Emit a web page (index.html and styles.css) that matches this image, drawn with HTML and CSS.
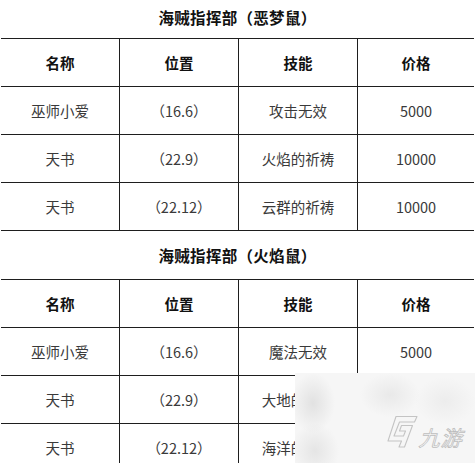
FILE: index.html
```html
<!DOCTYPE html>
<html lang="zh-CN">
<head>
<meta charset="utf-8">
<title>海贼指挥部</title>
<link rel="stylesheet" href="styles.css">
</head>
<body>
<div class="page">
  <div class="title first">海贼指挥部（恶梦鼠）</div>
  <div class="table">
    <div class="row head"><div class="cell">名称</div><div class="cell">位置</div><div class="cell">技能</div><div class="cell">价格</div></div>
    <div class="row"><div class="cell">巫师小爱</div><div class="cell">（16.6）</div><div class="cell">攻击无效</div><div class="cell">5000</div></div>
    <div class="row"><div class="cell">天书</div><div class="cell">（22.9）</div><div class="cell">火焰的祈祷</div><div class="cell">10000</div></div>
    <div class="row last"><div class="cell">天书</div><div class="cell">（22.12）</div><div class="cell">云群的祈祷</div><div class="cell">10000</div></div>
  </div>
  <div class="title second">海贼指挥部（火焰鼠）</div>
  <div class="table">
    <div class="row head"><div class="cell">名称</div><div class="cell">位置</div><div class="cell">技能</div><div class="cell">价格</div></div>
    <div class="row"><div class="cell">巫师小爱</div><div class="cell">（16.6）</div><div class="cell">魔法无效</div><div class="cell">5000</div></div>
    <div class="row"><div class="cell">天书</div><div class="cell">（22.9）</div><div class="cell">大地的祈祷</div><div class="cell">10000</div></div>
    <div class="row last"><div class="cell">天书</div><div class="cell">（22.12）</div><div class="cell">海洋的祈祷</div><div class="cell">10000</div></div>
  </div>
  <div class="watermark">
    <svg class="wm-logo" width="32" height="34" viewBox="0 0 32 34">
      <path d="M10 1.5 L31 1.5 L28.5 7 L13.5 7 L8 21 L17.5 21 L19.5 16 L13.5 16 L15.5 10.5 L26.5 10.5 L18.5 32 L13 32 L15.5 26 L2 26 Z" fill="none" stroke="#c4c4c4" stroke-width="1.1" stroke-linejoin="round"/>
    </svg>
    <span class="wm-text">九游</span>
  </div>
</div>
</body>
</html>
```

FILE: styles.css
```css
html, body {
  margin: 0;
  padding: 0;
  background: #ffffff;
}
body {
  font-family: "Noto Sans CJK SC", "Noto Sans", sans-serif;
  overflow: hidden;
}
.page {
  position: relative;
  width: 475px;
  height: 463px;
  overflow: hidden;
}
.title {
  display: flex;
  align-items: center;
  justify-content: center;
  font-size: 15.5px;
  font-weight: 700;
  color: #111111;
  letter-spacing: 0.3px;
}
.title.first {
  height: 34px;
  padding-bottom: 4px;
}
.title.second {
  height: 48px;
}
.table {
  width: 473px;
  margin-left: 1px;
}
.row {
  display: grid;
  grid-template-columns: 118px 119px 119px 117px;
  border-top: 1px solid #1e1e1e;
}
.row.last {
  border-bottom: 1px solid #1e1e1e;
}
.cell {
  height: 47px;
  display: flex;
  align-items: center;
  justify-content: center;
  font-size: 14.5px;
  color: #3a3a3a;
}
.cell + .cell {
  border-left: 1px solid #1e1e1e;
}
.head .cell {
  font-weight: 700;
  color: #111111;
  font-size: 14.5px;
}
.watermark {
  position: absolute;
  left: 295px;
  top: 373px;
  width: 180px;
  height: 90px;
  background:
    radial-gradient(ellipse 22px 30px at 18px 30px, rgba(212,212,212,0.6), rgba(212,212,212,0) 100%),
    radial-gradient(ellipse 24px 28px at 20px 78px, rgba(215,215,215,0.55), rgba(215,215,215,0) 100%),
    radial-gradient(ellipse 30px 22px at 95px 22px, rgba(220,220,220,0.5), rgba(220,220,220,0) 100%),
    radial-gradient(ellipse 30px 24px at 150px 28px, rgba(222,222,222,0.4), rgba(222,222,222,0) 100%),
    #f6f6f6;
  display: flex;
  align-items: flex-end;
  padding: 0 4px 14px 91px;
  box-sizing: border-box;
  gap: 3px;
}
.wm-logo {
  display: block;
  flex: none;
}
.wm-text {
  display: block;
  font-size: 21px;
  line-height: 22px;
  font-weight: 400;
  color: #fbfbfb;
  -webkit-text-stroke: 0.8px #bdbdbd;
  transform: skewX(-16deg);
  letter-spacing: 1px;
  margin-bottom: 1px;
}
```
